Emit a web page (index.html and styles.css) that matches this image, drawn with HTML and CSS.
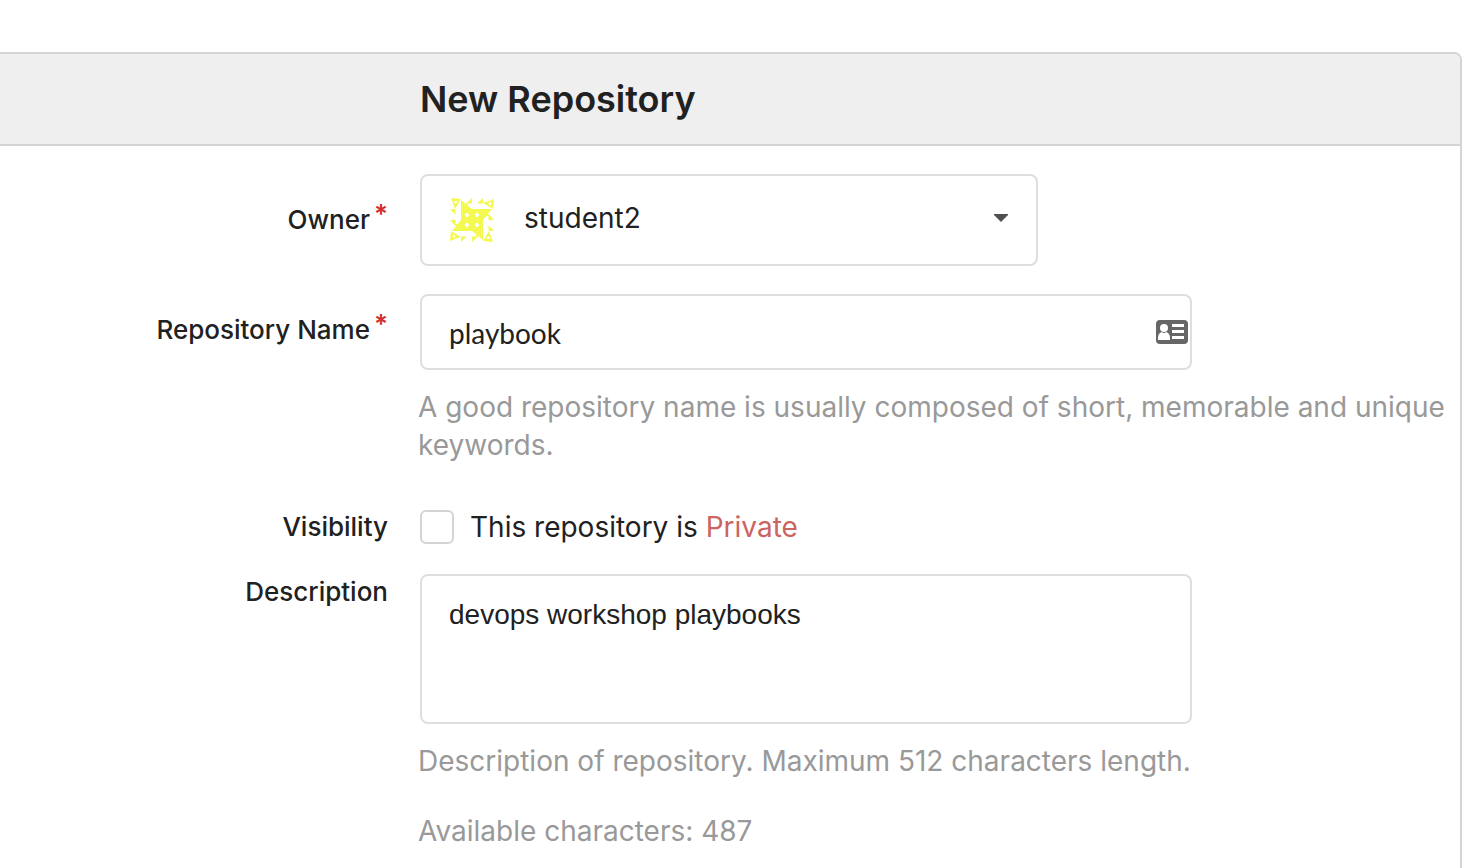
FILE: index.html
```html
<!DOCTYPE html>
<html lang="en">
<head>
<meta charset="utf-8">
<meta name="viewport" content="width=device-width, initial-scale=1">
<title>New Repository</title>
<link rel="stylesheet" href="styles.css">
</head>
<body>
<main class="card">
  <header class="card-header"><h1 class="title">New Repository</h1></header>
  <form class="form">
    <div class="row row-owner">
      <label class="label" for="owner">Owner<span class="required">*</span></label>
      <div class="select-box">
        <select class="control select" id="owner"><option>student2</option></select>
        <svg class="avatar" viewBox="0 0 44 44" aria-hidden="true">
          <g fill="#f4f952">
            <path fill-rule="evenodd" d="M11 11H33V33H11ZM17 14.500l-2.500 2.500 2.500 2.500 2.500-2.500ZM27 14.500l-2.500 2.500 2.500 2.500 2.500-2.500ZM17 24.500l-2.500 2.500 2.500 2.500 2.500-2.500ZM27 24.500l-2.500 2.500 2.500 2.500 2.500-2.500Z"/>
            <g id="side">
              <path fill-rule="evenodd" d="M1 0L11 1 5 11ZM4 3L5 6 8 3Z"/>
              <path d="M11 2L22 11H11ZM16 5.500L22 0V5.500H18V9ZM27 5.500L33 0V5.500Z"/>
            </g>
            <use href="#side" transform="rotate(90 22 22)"/>
            <use href="#side" transform="rotate(180 22 22)"/>
            <use href="#side" transform="rotate(270 22 22)"/>
          </g>
        </svg>
        <svg class="caret" viewBox="0 0 14 8" aria-hidden="true"><path fill="#505050" d="M0 0H14V1L7 8 0 1Z"/></svg>
      </div>
    </div>
    <div class="row row-name">
      <label class="label" for="name">Repository Name<span class="required">*</span></label>
      <div class="field">
        <div class="input-box">
          <input class="control input" id="name" type="text" value="playbook">
          <svg class="contact" viewBox="0 0 32 24" aria-hidden="true">
            <rect width="32" height="24" rx="4" fill="#666"/>
            <g fill="#fff"><circle cx="8" cy="8" r="4"/><path d="M2 20V18Q2 13 6 12Q8 14 10 12Q14 13 14 18V20ZM16 4H28V7H16ZM16 10H28V13H16ZM16 16H28V19H16Z"/></g>
          </svg>
        </div>
        <p class="help">A good repository name is usually composed of short, memorable and unique keywords.</p>
      </div>
    </div>
    <div class="row row-visibility">
      <label class="label" for="private">Visibility</label>
      <div class="check-line">
        <input class="checkbox" id="private" type="checkbox">
        <label for="private">This repository is <span class="private">Private</span></label>
      </div>
    </div>
    <div class="row">
      <label class="label" for="description">Description</label>
      <div class="field">
        <textarea class="control textarea" id="description">devops workshop playbooks</textarea>
        <p class="help">Description of repository. Maximum 512 characters length.</p>
        <p class="help help-count">Available characters: 487</p>
      </div>
    </div>
  </form>
</main>
</body>
</html>
```
FILE: styles.css
```css
* { box-sizing: border-box; }

body {
  margin: 0;
  padding-top: 52px;
  background: #fff;
  color: #212121;
  font: 28px/38px Inter, "Liberation Sans", sans-serif;
}

.card {
  min-height: calc(100vh - 52px);
  margin-right: 10px;
  border: solid #d4d4d5;
  border-width: 2px 2px 0 0;
  border-top-right-radius: 8px;
}

.card-header {
  padding: 22px 28px 22px 420px;
  border-bottom: 2px solid #d4d4d5;
  border-top-right-radius: 6px;
  background: #efefef;
}

.title {
  margin: 0;
  font-size: 36px;
  font-weight: 600;
  line-height: 46px;
}

.form { padding: 28px 12px 0 0; }

.row {
  display: grid;
  grid-template-columns: 388px minmax(0, 1fr);
  column-gap: 32px;
}

.row-owner { align-items: center; margin-bottom: 28px; }
.row-name { margin-bottom: 44px; }
.row-name .label { padding-top: 18px; }
.row-visibility { align-items: center; margin-bottom: 28px; }

.label {
  font-size: 26px;
  font-weight: 500;
  line-height: 36px;
  text-align: right;
}

.required {
  margin-left: 4px;
  color: #d0302f;
  font-weight: 600;
  line-height: 20px;
  vertical-align: 6px;
}

.control {
  display: block;
  width: 100%;
  margin: 0;
  border: 2px solid #dededf;
  border-radius: 8px;
  background: #fff;
  color: #212121;
  font: inherit;
}

.select-box { position: relative; max-width: 618px; }
.select {
  height: 92px;
  padding: 0 60px 4px 102px;
  appearance: none;
}
.avatar, .caret, .contact { position: absolute; pointer-events: none; }
.avatar { left: 30px; top: 24px; width: 44px; height: 44px; }
.caret { right: 30px; top: 40px; width: 14px; height: 8px; }

.input-box { position: relative; max-width: 772px; }
.input {
  height: 76px;
  padding: 2px 60px 0 27px;
  font-family: Lato, sans-serif;
}
.contact { right: 4px; top: 26px; width: 32px; height: 24px; }

.help {
  margin: 18px 0 0 -2px;
  color: #999;
}
.help-count { margin-top: 32px; }

.check-line { display: flex; align-items: center; gap: 16px; }
.checkbox {
  width: 34px;
  height: 34px;
  margin: 0;
  border: 2px solid #d4d4d5;
  border-radius: 6px;
  background: #fff;
  appearance: none;
}
.checkbox:checked { background: #666; }
.private { color: #cc6461; }

.textarea {
  max-width: 772px;
  height: 150px;
  padding: 20px 27px;
  font-family: "Liberation Sans", Arial, sans-serif;
  line-height: 38px;
  resize: none;
}
```
